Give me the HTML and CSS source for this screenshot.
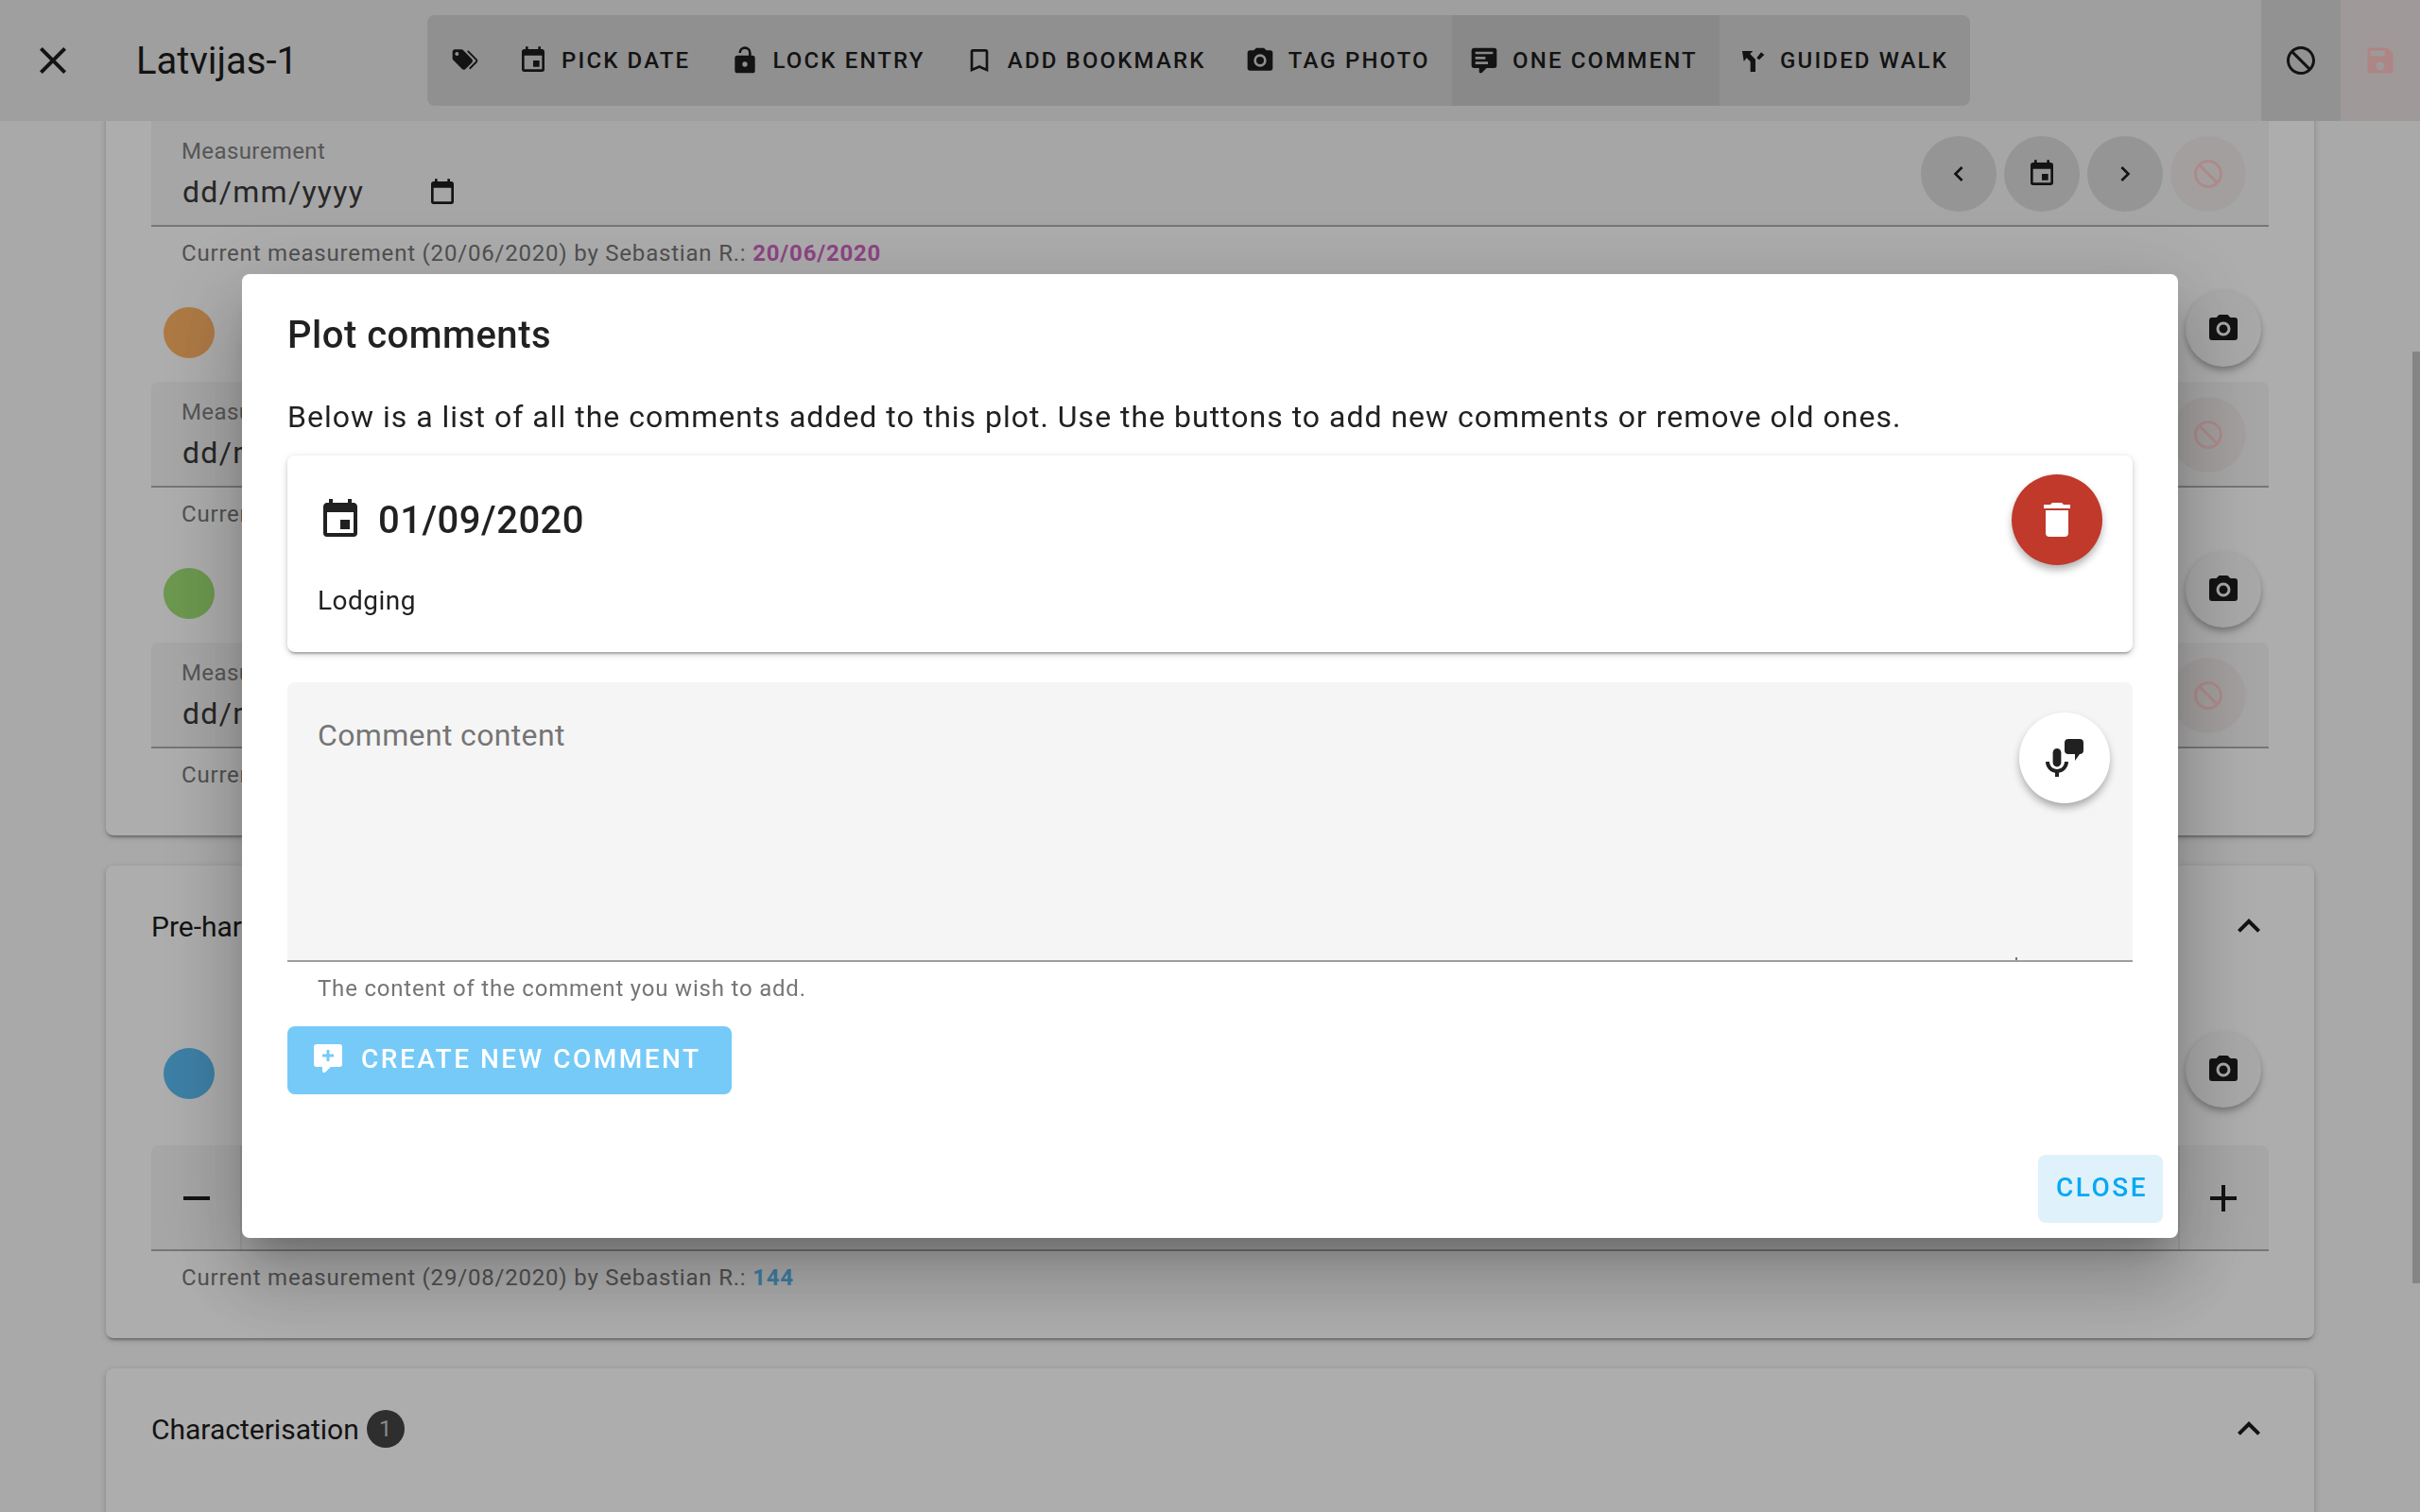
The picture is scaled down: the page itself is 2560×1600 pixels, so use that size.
FILE: index.html
```html
<!DOCTYPE html>
<html lang="en">
<head>
<meta charset="utf-8">
<title>Plot comments</title>
<link rel="stylesheet" href="styles.css">
</head>
<body>
<svg class="defs" width="0" height="0" aria-hidden="true">
  <defs>
    <symbol id="i-close" viewBox="0 0 24 24"><path d="M19,6.41L17.59,5L12,10.59L6.41,5L5,6.41L10.59,12L5,17.59L6.41,19L12,13.41L17.59,19L19,17.59L13.41,12L19,6.41Z"/></symbol>
    <symbol id="i-tags" viewBox="0 0 24 24"><path d="M5.5,9A1.5,1.5 0 0,0 7,7.5A1.5,1.5 0 0,0 5.5,6A1.5,1.5 0 0,0 4,7.5A1.5,1.5 0 0,0 5.5,9M17.41,11.58C17.77,11.94 18,12.44 18,13C18,13.55 17.78,14.05 17.41,14.41L12.41,19.41C12.05,19.77 11.55,20 11,20C10.45,20 9.95,19.78 9.58,19.41L2.59,12.42C2.22,12.05 2,11.55 2,11V6C2,4.89 2.89,4 4,4H9C9.55,4 10.05,4.22 10.41,4.58L17.41,11.58M13.54,5.71L14.54,4.71L21.41,11.58C21.78,11.94 22,12.45 22,13C22,13.55 21.78,14.05 21.42,14.41L16.04,19.79L15.04,18.79L20.75,13L13.54,5.71Z"/></symbol>
    <symbol id="i-event" viewBox="0 0 24 24"><path d="M19,19H5V8H19M16,1V3H8V1H6V3H5C3.89,3 3,3.89 3,5V19A2,2 0 0,0 5,21H19A2,2 0 0,0 21,19V5C21,3.89 20.1,3 19,3H18V1M17,12H12V17H17V12Z"/></symbol>
    <symbol id="i-calendar-blank" viewBox="0 0 24 24"><path d="M19,19H5V8H19M16,1V3H8V1H6V3H5C3.89,3 3,3.89 3,5V19A2,2 0 0,0 5,21H19A2,2 0 0,0 21,19V5C21,3.89 20.1,3 19,3H18V1Z"/></symbol>
    <symbol id="i-lock" viewBox="0 0 24 24"><path d="M18,8A2,2 0 0,1 20,10V20A2,2 0 0,1 18,22H6C4.89,22 4,21.1 4,20V10A2,2 0 0,1 6,8H15V6A3,3 0 0,0 12,3A3,3 0 0,0 9,6H7A5,5 0 0,1 12,1A5,5 0 0,1 17,6V8H18M12,17A2,2 0 0,0 14,15A2,2 0 0,0 12,13A2,2 0 0,0 10,15A2,2 0 0,0 12,17Z"/></symbol>
    <symbol id="i-bookmark" viewBox="0 0 24 24"><path d="M17,18L12,15.82L7,18V5H17M17,3H7A2,2 0 0,0 5,5V21L12,18L19,21V5C19,3.89 18.1,3 17,3Z"/></symbol>
    <symbol id="i-camera" viewBox="0 0 24 24"><path d="M4,4H7L9,2H15L17,4H20A2,2 0 0,1 22,6V18A2,2 0 0,1 20,20H4A2,2 0 0,1 2,18V6A2,2 0 0,1 4,4M12,7A5,5 0 0,0 7,12A5,5 0 0,0 12,17A5,5 0 0,0 17,12A5,5 0 0,0 12,7M12,9A3,3 0 0,1 15,12A3,3 0 0,1 12,15A3,3 0 0,1 9,12A3,3 0 0,1 12,9Z"/></symbol>
    <symbol id="i-comment" viewBox="0 0 24 24"><path d="M9,22A1,1 0 0,1 8,21V18H4A2,2 0 0,1 2,16V4C2,2.89 2.9,2 4,2H20A2,2 0 0,1 22,4V16A2,2 0 0,1 20,18H13.9L10.2,21.71C10,21.9 9.75,22 9.5,22V22H9M5,5V7H19V5H5M5,9V11H13V9H5M5,13V15H15V13H5Z"/></symbol>
    <symbol id="i-fork" viewBox="0 0 24 24"><path d="M4.5,4.5H13L10.7,6.8L15,11.2V21H11V13L8,10L5.8,12.8ZM16,10L19.5,5.5L22,7.5L18,11.5Z"/></symbol>
    <symbol id="i-cancel" viewBox="0 0 24 24"><path d="M12 2C17.5 2 22 6.5 22 12S17.5 22 12 22 2 17.5 2 12 6.5 2 12 2M12 4C10.1 4 8.4 4.6 7.1 5.7L18.3 16.9C19.3 15.5 20 13.8 20 12C20 7.6 16.4 4 12 4M16.9 18.3L5.7 7.1C4.6 8.4 4 10.1 4 12C4 16.4 7.6 20 12 20C13.9 20 15.6 19.4 16.9 18.3Z"/></symbol>
    <symbol id="i-save" viewBox="0 0 24 24"><path d="M15,9H5V5H15M12,19A3,3 0 0,1 9,16A3,3 0 0,1 12,13A3,3 0 0,1 15,16A3,3 0 0,1 12,19M17,3H5C3.89,3 3,3.9 3,5V19A2,2 0 0,0 5,21H19A2,2 0 0,0 21,19V7L17,3Z"/></symbol>
    <symbol id="i-left" viewBox="0 0 24 24"><path d="M15.41,16.58L10.83,12L15.41,7.41L14,6L8,12L14,18L15.41,16.58Z"/></symbol>
    <symbol id="i-right" viewBox="0 0 24 24"><path d="M8.59,16.58L13.17,12L8.59,7.41L10,6L16,12L10,18L8.59,16.58Z"/></symbol>
    <symbol id="i-up" viewBox="0 0 24 24"><path d="M7.41,15.41L12,10.83L16.59,15.41L18,14L12,8L6,14L7.41,15.41Z"/></symbol>
    <symbol id="i-minus" viewBox="0 0 24 24"><path d="M19,13H5V11H19V13Z"/></symbol>
    <symbol id="i-plus" viewBox="0 0 24 24"><path d="M19,13H13V19H11V13H5V11H11V5H13V11H19V13Z"/></symbol>
    <symbol id="i-delete" viewBox="0 0 24 24"><path d="M19,4H15.5L14.5,3H9.5L8.5,4H5V6H19M6,19A2,2 0 0,0 8,21H16A2,2 0 0,0 18,19V7H6V19Z"/></symbol>
    <symbol id="i-comment-plus" viewBox="0 0 24 24"><path d="M9,22A1,1 0 0,1 8,21V18H4A2,2 0 0,1 2,16V4C2,2.89 2.9,2 4,2H20A2,2 0 0,1 22,4V16A2,2 0 0,1 20,18H13.9L10.2,21.71C10,21.9 9.75,22 9.5,22V22H9M11,6V9H8V11H11V14H13V11H16V9H13V6H11Z"/></symbol>
    <symbol id="i-mic-msg" viewBox="0 0 24 24"><path d="M8 7a2.2 2.2 0 0 1 2.2 2.2v5.3a2.2 2.2 0 0 1-4.4 0V9.2A2.2 2.2 0 0 1 8 7zM2 14h2c0 2.2 1.8 4 4 4s4-1.8 4-4h2c0 3-2.2 5.4-5 5.9V22H7v-2.1C4.2 19.4 2 17 2 14zM14 2h6a2 2 0 0 1 2 2v4a2 2 0 0 1-2 2l-2.5 3.5V10H14a2 2 0 0 1-2-2V4a2 2 0 0 1 2-2z"/></symbol>
  </defs>
</svg>

<div class="page">
  <header class="appbar">
    <span class="bar-close"><svg class="icon i48"><use href="#i-close"/></svg></span>
    <h1 class="bar-title">Latvijas-1</h1>
    <nav class="toolbar">
      <button class="tool tool-first"><svg class="icon i32"><use href="#i-tags"/></svg></button>
      <button class="tool"><svg class="icon i32"><use href="#i-event"/></svg>Pick date</button>
      <button class="tool"><svg class="icon i32"><use href="#i-lock"/></svg>Lock entry</button>
      <button class="tool"><svg class="icon i32"><use href="#i-bookmark"/></svg>Add bookmark</button>
      <button class="tool"><svg class="icon i32"><use href="#i-camera"/></svg>Tag photo</button>
      <button class="tool tool-active"><svg class="icon i32"><use href="#i-comment"/></svg>One comment</button>
      <button class="tool"><svg class="icon i32"><use href="#i-fork"/></svg>Guided walk</button>
    </nav>
    <div class="bar-actions">
      <button class="bar-action bar-cancel"><svg class="icon i36"><use href="#i-cancel"/></svg></button>
      <button class="bar-action bar-save"><svg class="icon i36"><use href="#i-save"/></svg></button>
    </div>
  </header>

  <main class="content">
    <section class="card card-first">
      <div class="field">
        <div class="field-main">
          <span class="field-label">Measurement</span>
          <span class="field-value">dd/mm/yyyy<svg class="icon i32 date-icon"><use href="#i-calendar-blank"/></svg></span>
        </div>
        <div class="field-nav">
          <button class="nav-btn"><svg class="icon i32"><use href="#i-left"/></svg></button>
          <button class="nav-btn"><svg class="icon i32"><use href="#i-event"/></svg></button>
          <button class="nav-btn"><svg class="icon i32"><use href="#i-right"/></svg></button>
          <button class="nav-btn nav-off"><svg class="icon i36"><use href="#i-cancel"/></svg></button>
        </div>
      </div>
      <p class="hint">Current measurement (20/06/2020) by Sebastian R.: <b class="val-purple">20/06/2020</b></p>

      <div class="trait-row">
        <span class="dot dot-orange"></span>
        <button class="cam-btn"><svg class="icon i36"><use href="#i-camera"/></svg></button>
      </div>
      <div class="field">
        <div class="field-main">
          <span class="field-label">Measurement</span>
          <span class="field-value">dd/mm/yyyy</span>
        </div>
        <div class="field-nav">
          <button class="nav-btn nav-off"><svg class="icon i36"><use href="#i-cancel"/></svg></button>
        </div>
      </div>
      <p class="hint">Current measurement</p>

      <div class="trait-row">
        <span class="dot dot-green"></span>
        <button class="cam-btn"><svg class="icon i36"><use href="#i-camera"/></svg></button>
      </div>
      <div class="field">
        <div class="field-main">
          <span class="field-label">Measurement</span>
          <span class="field-value">dd/mm/yyyy</span>
        </div>
        <div class="field-nav">
          <button class="nav-btn nav-off"><svg class="icon i36"><use href="#i-cancel"/></svg></button>
        </div>
      </div>
      <p class="hint">Current measurement</p>
    </section>

    <section class="card card-second">
      <div class="card-head">
        <span class="card-title">Pre-harvest</span>
        <svg class="icon i48"><use href="#i-up"/></svg>
      </div>
      <div class="trait-row trait-row-gap">
        <span class="dot dot-blue"></span>
        <button class="cam-btn"><svg class="icon i36"><use href="#i-camera"/></svg></button>
      </div>
      <div class="field field-number">
        <span class="affix affix-left"><svg class="icon i48"><use href="#i-minus"/></svg></span>
        <span class="affix-fill"></span>
        <span class="affix affix-right"><svg class="icon i48"><use href="#i-plus"/></svg></span>
      </div>
      <p class="hint">Current measurement (29/08/2020) by Sebastian R.: <b class="val-blue">144</b></p>
    </section>

    <section class="card card-third">
      <div class="card-head">
        <span class="card-title">Characterisation <span class="badge">1</span></span>
        <svg class="icon i48"><use href="#i-up"/></svg>
      </div>
    </section>
  </main>
  <div class="scroll-thumb"></div>
</div>

<div class="overlay">
  <div class="dialog">
    <h2 class="dlg-title">Plot comments</h2>
    <p class="dlg-text">Below is a list of all the comments added to this plot. Use the buttons to add new comments or remove old ones.</p>

    <article class="comment">
      <div class="comment-head">
        <svg class="icon i48"><use href="#i-event"/></svg>
        <span class="comment-date">01/09/2020</span>
        <button class="fab fab-red"><svg class="icon i48"><use href="#i-delete"/></svg></button>
      </div>
      <p class="comment-body">Lodging</p>
    </article>

    <div class="textarea">
      <span class="placeholder">Comment content</span>
      <button class="fab fab-white"><svg class="icon i48"><use href="#i-mic-msg"/></svg></button>
      <span class="resize-tick"></span>
    </div>
    <p class="textarea-hint">The content of the comment you wish to add.</p>

    <button class="create-btn"><svg class="icon i36"><use href="#i-comment-plus"/></svg>Create new comment</button>

    <div class="dlg-actions">
      <button class="close-btn">Close</button>
    </div>
  </div>
</div>
</body>
</html>
```

FILE: styles.css
```css
* { box-sizing: border-box; }
html, body { margin: 0; height: 100%; }
body {
  background: #fafafa;
  font-family: Roboto, "Noto Sans", sans-serif;
  color: #1c1c1c;
  overflow: hidden;
}
button { border: 0; padding: 0; font: inherit; color: inherit; background: none; }
p, h1, h2 { margin: 0; }
.defs { position: absolute; }
.icon { display: block; flex: none; fill: currentColor; }
.i32 { width: 32px; height: 32px; }
.i36 { width: 36px; height: 36px; }
.i48 { width: 48px; height: 48px; }

.page { position: relative; height: 1600px; overflow: hidden; }

/* App bar */
.appbar {
  position: absolute;
  top: 0; left: 0; right: 0;
  z-index: 2;
  height: 128px;
  display: flex;
  align-items: center;
  background: #ebebeb;
}
.bar-close { margin-left: 32px; }
.bar-title {
  margin-left: 64px;
  width: 308px;
  font-size: 40px;
  font-weight: 400;
  letter-spacing: 0;
}
.toolbar {
  width: 1632px;
  height: 96px;
  display: flex;
  background: #d5d5d5;
  border-radius: 8px;
  overflow: hidden;
}
.tool {
  height: 96px;
  display: flex;
  align-items: center;
  gap: 14px;
  padding: 0 23.3px 1px 18px;
  font-size: 24px;
  font-weight: 500;
  letter-spacing: 2.14px;
  text-transform: uppercase;
  white-space: nowrap;
}
.tool-first { padding: 0 22px 2px 24px; }
.tool-active { background: #cbcbcb; }
.bar-actions { margin-left: auto; display: flex; height: 128px; }
.bar-action { width: 84px; height: 128px; display: flex; align-items: center; justify-content: center; }
.bar-cancel { background: #d7d7d7; }
.bar-save { background: #eae2e2; color: #ffc4c4; }

/* Page content */
.content { width: 2336px; margin-left: 112px; }
.card {
  background: #ffffff;
  border-radius: 8px;
  box-shadow: 0 4px 2px -2px rgba(0,0,0,.2), 0 2px 4px 0 rgba(0,0,0,.14), 0 2px 10px 0 rgba(0,0,0,.12);
  padding: 0 48px;
  margin-bottom: 32px;
}
.card-first { height: 884px; padding-top: 128px; }
.card-second { height: 500px; }
.card-third { height: 400px; }

.field {
  height: 112px;
  display: flex;
  align-items: stretch;
  justify-content: space-between;
  background: #f5f5f5;
  border-bottom: 2px solid #afafaf;
  border-radius: 8px 8px 0 0;
}
.card-first > .field:first-child { border-radius: 0; }
.field-main { padding: 18px 0 0 32px; display: flex; flex-direction: column; }
.field-label { font-size: 24px; line-height: 28px; letter-spacing: .4px; color: #7f7f7f; }
.field-value {
  margin-top: 9px;
  padding-left: 1px;
  display: flex;
  align-items: center;
  gap: 66px;
  font-size: 32px;
  line-height: 40px;
  letter-spacing: 1.3px;
  color: #3a3a3a;
}
.date-icon { color: #1c1c1c; margin: 2px 0 0 1px; }
.field-nav { display: flex; gap: 8px; padding: 16px 24px 0 0; }
.nav-btn {
  width: 80px; height: 80px;
  border-radius: 50%;
  background: #dcdcdc;
  display: flex; align-items: center; justify-content: center;
}
.nav-off { background: #f0eaea; color: #ffcccc; }
.hint {
  height: 68px;
  padding: 14px 0 0 32px;
  font-size: 24px;
  line-height: 28px;
  letter-spacing: .8px;
  color: #777;
}
.val-purple { font-weight: 700; color: #d165c4; }
.val-blue { font-weight: 700; color: #5abcf3; }

.trait-row {
  height: 96px;
  display: flex;
  justify-content: space-between;
  align-items: flex-start;
  padding: 0 8px 0 13px;
}
.trait-row-gap { height: 120px; margin-top: 48px; }
.dot { width: 54px; height: 54px; border-radius: 50%; margin-top: 17px; }
.dot-orange { background: #ffb366; }
.dot-green { background: #9fe074; }
.dot-blue { background: #5abcf3; }
.cam-btn {
  width: 80px; height: 80px;
  border-radius: 50%;
  background: #f8f8f8;
  display: flex; align-items: center; justify-content: center;
  box-shadow: 0 6px 10px -2px rgba(0,0,0,.25), 0 2px 6px rgba(0,0,0,.14);
}

.card-head {
  height: 128px;
  display: flex;
  align-items: center;
  justify-content: space-between;
  margin-right: -3px;
}
.card-title { font-size: 30px; display: flex; align-items: center; gap: 8px; }
.badge {
  width: 40px; height: 40px;
  border-radius: 50%;
  background: #444;
  color: #ccc;
  font-size: 24px;
  display: flex; align-items: center; justify-content: center;
}
.field-number { justify-content: flex-start; }
.affix { width: 96px; padding-top: 2px; display: flex; align-items: center; justify-content: center; }
.affix-left { border-right: 2px solid #e4e4e4; padding-left: 2px; }
.affix-right { border-left: 2px solid #e4e4e4; padding-right: 2px; }
.affix-fill { flex: 1; }

.scroll-thumb {
  position: absolute;
  right: 0; top: 372px;
  width: 8px; height: 986px;
  background: #c4c4c4;
  z-index: 3;
}

/* Dialog */
.overlay {
  position: fixed;
  inset: 0;
  z-index: 10;
  background: rgba(0,0,0,.32);
  display: flex;
  align-items: center;
  justify-content: center;
}
.dialog {
  width: 2048px;
  height: 1020px;
  background: #fff;
  border-radius: 8px;
  padding: 33px 48px 0;
  color: #212121;
  box-shadow: 0 22px 30px -14px rgba(0,0,0,.2), 0 48px 76px 6px rgba(0,0,0,.14), 0 18px 92px 16px rgba(0,0,0,.12);
}
.dlg-title { font-size: 40px; line-height: 64px; font-weight: 500; letter-spacing: .5px; }
.dlg-text { margin-top: 30px; font-size: 32px; line-height: 48px; letter-spacing: 1px; font-weight: 400; }
.comment {
  margin-top: 17px;
  height: 208px;
  background: #fff;
  border-radius: 8px;
  box-shadow: 0 4px 2px -2px rgba(0,0,0,.2), 0 2px 4px 0 rgba(0,0,0,.14), 0 2px 10px 0 rgba(0,0,0,.12);
  padding: 20px 32px 0;
}
.comment-head { display: flex; align-items: center; height: 96px; }
.comment-date { margin-left: 16px; font-size: 40px; font-weight: 500; letter-spacing: .5px; }
.fab {
  width: 96px; height: 96px;
  border-radius: 50%;
  display: flex; align-items: center; justify-content: center;
  box-shadow: 0 6px 10px -2px rgba(0,0,0,.25), 0 4px 10px rgba(0,0,0,.12);
}
.fab-red { margin-left: auto; background: #c0392b; color: #fff; }
.comment-body { margin-top: 18px; font-size: 28px; line-height: 40px; letter-spacing: .5px; }
.textarea {
  position: relative;
  margin-top: 32px;
  height: 296px;
  background: #f5f5f5;
  border-bottom: 2px solid #9e9e9e;
  border-radius: 8px 8px 0 0;
  padding: 36px 24px 0 32px;
  display: flex;
  align-items: flex-start;
  justify-content: space-between;
}
.placeholder { font-size: 32px; line-height: 40px; letter-spacing: .35px; color: #757575; }
.fab-white { margin-top: -4px; background: #fff; }
.resize-tick {
  position: absolute;
  right: 122px; bottom: 0;
  width: 2px; height: 3px;
  background: #777;
}
.textarea-hint { margin-top: 12px; padding-left: 32px; font-size: 24px; line-height: 32px; letter-spacing: .8px; color: #757575; }
.create-btn {
  margin-top: 24px;
  height: 72px;
  width: 470px;
  display: flex;
  align-items: center;
  gap: 17px;
  padding: 0 0 4px 25px;
  border-radius: 8px;
  background: #75caf8;
  color: #fff;
  font-size: 28px;
  font-weight: 500;
  letter-spacing: 2.5px;
  text-transform: uppercase;
  white-space: nowrap;
}
.dlg-actions { margin-top: 64px; display: flex; justify-content: flex-end; margin-right: -32px; }
.close-btn {
  width: 132px; height: 72px;
  padding: 0 0 3px 3px;
  border-radius: 8px;
  background: #dff1fb;
  color: #03a9f4;
  font-size: 28px;
  font-weight: 500;
  letter-spacing: 2.5px;
  text-transform: uppercase;
}
```
